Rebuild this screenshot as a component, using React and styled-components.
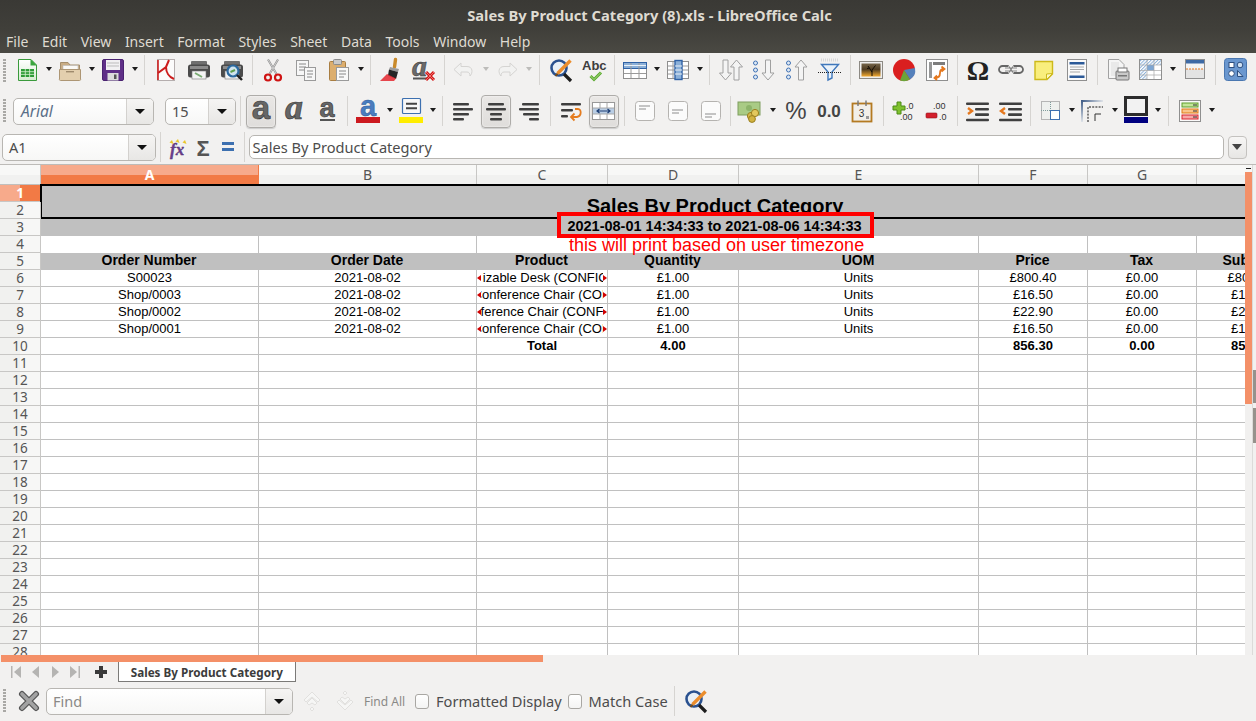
import React from 'react';
import styled, { createGlobalStyle } from 'styled-components';

const Global = createGlobalStyle`
  html, body { margin: 0; padding: 0; background: #f2f1f0; }
  * { box-sizing: border-box; }
`;

const UI = `"Noto Sans", "Open Sans", sans-serif`;
const SHEET = `"Liberation Sans", Arial, sans-serif`;

const Page = styled.div`
  width: 1256px;
  height: 721px;
  overflow: hidden;
  display: flex;
  flex-direction: column;
  background: #f2f1f0;
  font-family: ${UI};
`;

const TitleBar = styled.div`
  height: 29px;
  display: flex;
  align-items: center;
  justify-content: center;
  padding: 0 0 0 43px;
  background: linear-gradient(#3a3935, #403f3a);
  color: #dfdbd2;
  font-size: 14.7px;
  font-weight: 700;
`;

const MenuBar = styled.div`
  height: 24px;
  display: flex;
  align-items: center;
  padding-left: 6px;
  gap: 13.6px;
  background: linear-gradient(#403f3a, #4a4943);
  color: #dfdbd2;
  font-size: 14px;
`;

const Toolbar = styled.div`
  height: ${p => p.$h}px;
  display: flex;
  align-items: center;
  padding-left: ${p => p.$pad}px;
  padding-top: ${p => p.$top || 0}px;
  position: relative;
`;

const Grip = styled.div`
  position: absolute;
  left: 3px;
  top: ${p => p.$y}px;
  width: 3px;
  height: 23px;
  background: repeating-linear-gradient(#a9a8a5 0 2px, transparent 2px 3px);
`;

const Tool = styled.div`
  width: ${p => (p.$active ? 30 : p.$w || 33)}px;
  height: 33px;
  margin: 0 ${p => (p.$active ? 1.5 : 0)}px;
  flex: none;
  display: flex;
  align-items: center;
  justify-content: center;
  border-radius: 4px;
  ${p => p.$active && `
    background: linear-gradient(#e9e7e5, #dfdddb);
    border: 1px solid #aeaca9;
    box-shadow: inset 0 0 2px #fff, 0 1px 1px #ccc;
  `}
`;

const Drop = styled.div`
  width: ${p => p.$w || 10}px;
  flex: none;
  display: flex;
  justify-content: center;
  &::after {
    content: '';
    margin-top: -2px;
    border-left: 3.5px solid transparent;
    border-right: 3.5px solid transparent;
    border-top: 4px solid ${p => (p.$off ? '#bdbcba' : '#1c1c1c')};
  }
`;

const Sep = styled.div`
  width: ${p => p.$w || 8}px;
  height: 30px;
  flex: none;
  display: flex;
  justify-content: center;
  &::after { content: ''; width: 1px; background: #d6d4d1; }
`;

const Combo = styled.div`
  width: ${p => p.$w}px;
  height: ${p => p.$h || 27}px;
  margin-right: ${p => p.$gap || 0}px;
  flex: none;
  display: flex;
  border: 1px solid #b8b6b2;
  border-radius: 5px;
  background: linear-gradient(#fff, #f7f7f6);
  overflow: hidden;
`;

const ComboText = styled.div`
  flex: 1;
  display: flex;
  align-items: center;
  padding-left: ${p => p.$pad || 7}px;
  font-size: ${p => p.$size || 14.5}px;
  font-style: ${p => (p.$italic ? 'italic' : 'normal')};
  color: ${p => p.$color || '#4c4c4c'};
`;

const ComboButton = styled.div`
  width: ${p => p.$w}px;
  border-left: 1px solid #d3d1ce;
  background: linear-gradient(#f5f4f3, #e8e7e5);
  display: flex;
  align-items: center;
  justify-content: center;
  &::after {
    content: '';
    border-left: 5px solid transparent;
    border-right: 5px solid transparent;
    border-top: 5px solid #111;
  }
`;

const FormulaBar = styled.div`
  height: 34px;
  flex: none;
  display: flex;
  align-items: center;
  padding-left: 2px;
  padding-bottom: 1px;
  border-bottom: 1px solid #bdbbb8;
`;

const FormulaInput = styled.div`
  width: 975px;
  height: 24px;
  display: flex;
  align-items: center;
  padding-left: 3px;
  background: #fff;
  border: 1px solid #b8b6b2;
  border-radius: 5px;
  font-size: 14.6px;
  color: #4c4c4c;
`;

const ExpandButton = styled.div`
  width: 19px;
  height: 23px;
  margin-left: 4px;
  border: 1px solid #c4c2bf;
  border-radius: 4px;
  background: linear-gradient(#f7f6f5, #e7e6e4);
  display: flex;
  align-items: center;
  justify-content: center;
  &::after {
    content: '';
    border-left: 5.5px solid transparent;
    border-right: 5.5px solid transparent;
    border-top: 6px solid #444;
  }
`;

const SheetArea = styled.div`
  height: 490px;
  flex: none;
  display: flex;
  overflow: hidden;
  background: #fff;
`;

const SheetView = styled.div`
  width: 1245px;
  height: 490px;
  flex: none;
  overflow: hidden;
  position: relative;
`;

const Grid = styled.div`
  width: 1388px;
  display: grid;
  grid-template-columns: 41px 218px 218px 131px 131px 240px 109px 109px 109px 82px;
  grid-template-rows: 20px;
  grid-auto-rows: 17px;
  font-family: ${SHEET};
  font-size: 13px;
  color: #000;
`;

const ColHead = styled.div`
  display: flex;
  align-items: center;
  justify-content: center;
  font-family: ${UI};
  font-size: 14px;
  font-weight: ${p => (p.$on ? 700 : 400)};
  color: ${p => (p.$on ? '#fff' : '#555')};
  border-right: 1px solid ${p => (p.$on ? '#f27a45' : '#c8c7c5')};
  border-bottom: 1px solid #c0bfbd;
  background: ${p => (p.$on
    ? 'linear-gradient(#f7aa8b 0 55%, #f27a45 55%)'
    : 'linear-gradient(#f8f8f7 0 55%, #f1f1f0 55%)')};
`;

const RowHead = styled.div`
  display: flex;
  align-items: center;
  justify-content: center;
  font-family: ${UI};
  font-size: 13.5px;
  font-weight: ${p => (p.$on ? 700 : 400)};
  color: ${p => (p.$on ? '#fff' : '#555')};
  border-right: 1px solid #c8c7c5;
  border-bottom: 1px solid #c8c7c5;
  background: ${p => (p.$on
    ? 'linear-gradient(90deg, #f7aa8b 0 50%, #f27a45 50%)'
    : 'linear-gradient(90deg, #f1f1ef 0 50%, #f7f7f6 50%)')};
`;

const TitleCell = styled.div`
  grid-column: 2 / -1;
  grid-row: span 2;
  display: flex;
  align-items: flex-end;
  justify-content: center;
  background: #c0c0c0;
  border: solid #000;
  border-width: 2px 0 2px 2px;
  font-size: 20px;
  font-weight: 700;
  line-height: 22px;
  margin-left: -1px;
  margin-top: -1px;
`;

const BandCell = styled.div`
  grid-column: 2 / -1;
  background: #c0c0c0;
`;

const Cell = styled.div`
  position: relative;
  display: flex;
  align-items: center;
  justify-content: center;
  white-space: pre;
  overflow: hidden;
  padding-bottom: 2px;
  font-weight: ${p => (p.$bold ? 700 : 400)};
  border-right: 1px solid #c0c0c0;
  border-bottom: ${p => (p.$open ? 'none' : '1px solid #c0c0c0')};
`;

const HeadCell = styled.div`
  display: flex;
  align-items: center;
  justify-content: center;
  white-space: nowrap;
  padding: 0 2px 3px 0;
  background: #c0c0c0;
  font-size: 14px;
  font-weight: 700;
`;

const ClipMark = styled.span`
  position: absolute;
  top: 0;
  bottom: 0;
  width: 4px;
  ${p => (p.$side === 'left' ? 'left: 0;' : 'right: 0;')}
  display: flex;
  align-items: center;
  background: #fff;
  &::after {
    content: '';
    border-top: 3px solid transparent;
    border-bottom: 3px solid transparent;
    ${p => (p.$side === 'left' ? 'border-right: 4px solid #d00000;' : 'border-left: 4px solid #d00000;')}
  }
`;

const RedBox = styled.div`
  position: absolute;
  left: 557px;
  top: 47px;
  width: 317px;
  height: 26px;
  display: flex;
  align-items: center;
  justify-content: center;
  padding: 1px 2px 0 0;
  background: #c0c0c0;
  border: 4px solid #f00;
  font-family: ${SHEET};
  font-size: 14.5px;
  font-weight: 700;
  color: #000;
  white-space: nowrap;
`;

const RedNote = styled.div`
  position: absolute;
  left: 569px;
  top: 70px;
  font-family: ${SHEET};
  font-size: 18px;
  line-height: 20px;
  color: #f00;
  white-space: nowrap;
`;

const VScroll = styled.div`
  width: 7px;
  flex: none;
  background: #f1f0ef;
  display: flex;
  flex-direction: column;
`;

const ScrollCap = styled.div`
  height: 7px;
  flex: none;
  background: #f7f7f6;
  display: flex;
  align-items: center;
  justify-content: center;
  &::after { content: ''; width: 5px; height: 1px; background: #222; }
`;

const VThumb = styled.div`
  height: 232px;
  flex: none;
  background: #f49068;
`;

const EdgeStrip = styled.div`
  width: 4px;
  flex: none;
  background: #f2f1f0;
  border-left: 1px solid #dcdbd9;
  display: flex;
  flex-direction: column;
  padding-top: 205px;
  gap: 5px;
`;

const EdgeMark = styled.div`
  height: ${p => p.$h}px;
  background: #96928c;
`;

const HScroll = styled.div`
  height: 7px;
  flex: none;
  padding-left: 1px;
  background: #f2f1f0;
`;

const HThumb = styled.div`
  width: 542px;
  height: 7px;
  background: #f49068;
`;

const TabBar = styled.div`
  height: 20px;
  flex: none;
  display: flex;
`;

const NavSlot = styled.div`
  width: ${p => p.$w || 19.6}px;
  padding-left: ${p => p.$pad || 0}px;
  flex: none;
  display: flex;
  align-items: center;
  justify-content: center;
`;

const SheetTab = styled.div`
  width: 178px;
  height: 20px;
  flex: none;
  display: flex;
  align-items: center;
  justify-content: center;
  background: #fff;
  border: 1px solid #7b7a78;
  border-top: none;
  font-size: 11.7px;
  font-weight: 700;
  color: #3c3c3c;
`;

const FindBar = styled.div`
  height: 39px;
  flex: none;
  display: flex;
  align-items: center;
  padding: 0 0 1px 12px;
  position: relative;
`;

const FindAll = styled.span`
  width: 40px;
  margin: 0 11px 0 3px;
  font-size: 12px;
  color: #8a8987;
  white-space: nowrap;
`;

const CheckBox = styled.span`
  width: 14px;
  height: 15px;
  margin-right: ${p => p.$gap}px;
  flex: none;
  border: 1px solid #a9a7a3;
  border-radius: 3px;
  background: linear-gradient(#fff, #f4f4f3);
`;

const CheckLabel = styled.span`
  margin-right: ${p => p.$gap}px;
  font-size: 14.6px;
  color: #4c4c4c;
  white-space: nowrap;
`;

const Svg = ({ w = 24, h = 24, children }) => (
  <svg width={w} height={h} viewBox={`0 0 ${w} ${h}`} fill="none" overflow="visible">{children}</svg>
);

const Bars = ({ rows, y = 4, step = 5, c = '#3f3f3f' }) => rows.map(([x, w], i) => (
  <rect key={i} x={x} y={y + i * step} width={w} height="2.6" rx="1" fill={c} />
));

const letterFont = '"Liberation Sans", sans-serif';
const serifFont = '"Liberation Serif", serif';

const NewDoc = () => (
  <Svg>
    <defs><linearGradient id="ng" x1="0" y1="0" x2="0" y2="1"><stop offset="0" stopColor="#fff" /><stop offset="1" stopColor="#d5ecd0" /></linearGradient></defs>
    <path d="M3.5 1.5H16L21.5 7V22.5H3.5Z" fill="url(#ng)" stroke="#3a9a3c" />
    <path d="M15.5 1L22 7.5H15.5Z" fill="#3aa53e" />
    <rect x="6" y="11" width="13" height="8" fill="#2e9c37" />
    <path d="M6 13.7H19M6 16.4H19M10.3 11V19M14.6 11V19" stroke="#d8f2d2" strokeWidth=".8" />
  </Svg>
);
const Open = () => (
  <Svg>
    <path d="M2.5 21.5V4.5H10L12 7H21.5V21.5Z" fill="#c9ad85" stroke="#a58e6c" />
    <rect x="5" y="7.5" width="15" height="5" fill="#fbfaf6" stroke="#bbb" strokeWidth=".6" />
    <path d="M1.5 11.5H22.5V21A1 1 0 0 1 21.5 22.5H2.5A1 1 0 0 1 1.5 21Z" fill="#e3cfae" stroke="#ad9674" />
    <rect x="8" y="13" width="8" height="1.4" fill="#9e8a6d" />
  </Svg>
);
const Save = () => (
  <Svg>
    <rect x="1.5" y="1.5" width="21" height="21" rx="1.5" fill="#5f2f87" stroke="#4a2270" />
    <rect x="5" y="2" width="14" height="10" fill="#f1f0f2" />
    <path d="M6 5H18M6 8H18" stroke="#bbb" />
    <rect x="6.5" y="15" width="11" height="7.5" fill="#dcdcdc" />
    <rect x="13" y="16.5" width="2.5" height="4.5" fill="#555" />
  </Svg>
);
const Pdf = () => (
  <Svg>
    <rect x="3.5" y="1.5" width="17" height="21" fill="#fbfbfb" stroke="#b5aeae" />
    <path d="M15 2L12 9L4 15M12 9C12 14 15 19 20 21" stroke="#cc1d1d" strokeWidth="2" />
    <path d="M4 2V22" stroke="#cc1d1d" strokeWidth="1.6" />
  </Svg>
);
const Print = ({ glass }) => (
  <Svg>
    <rect x="4" y="3" width="16" height="5" rx="1" fill="#6f6f6f" />
    <rect x="1" y="6.5" width="22" height="13" rx="2.5" fill="#4b4b4b" />
    <rect x="3" y="8" width="18" height="3" fill="#8b8b8b" />
    <rect x="5" y="13" width="14" height="8" fill="#f4f4f4" stroke="#777" strokeWidth=".6" />
    {glass ? (
      <>
        <circle cx="13" cy="13" r="5.5" fill="#cfe3ee" stroke="#2c6aa0" strokeWidth="2.2" />
        <path d="M17 17L22 22" stroke="#222" strokeWidth="2.4" />
        <path d="M10.5 14L15 12" stroke="#5da04e" strokeWidth="2" />
      </>
    ) : <path d="M8 15L15 19" stroke="#79ab72" strokeWidth="2" />}
  </Svg>
);
const Cut = () => (
  <Svg>
    <path d="M8.5 16L17 1.5M15.5 16L7 1.5" stroke="#8d8d8d" strokeWidth="2" />
    <path d="M8.5 16L17 1.5M15.5 16L7 1.5" stroke="#e9e9e9" strokeWidth=".7" />
    <circle cx="7" cy="19.5" r="3" stroke="#cf1313" strokeWidth="2.2" />
    <circle cx="17" cy="19.5" r="3" stroke="#cf1313" strokeWidth="2.2" />
  </Svg>
);
const Copy = () => (
  <Svg>
    <rect x="2.5" y="2.5" width="12" height="15" fill="#f7f7f7" stroke="#9a9a9a" />
    <path d="M5 6H12M5 9H12M5 12H11" stroke="#888" />
    <rect x="10.5" y="9.5" width="11" height="13" fill="#f7f7f7" stroke="#9a9a9a" />
    <path d="M13 13H19M13 16H19M13 19H18" stroke="#888" />
  </Svg>
);
const Paste = () => (
  <Svg>
    <rect x="2.5" y="3.5" width="16" height="19" rx="1" fill="#dcae6e" stroke="#a97e42" />
    <rect x="6.5" y="1.5" width="8" height="5" rx="1" fill="#c9c9c9" stroke="#8c8c8c" />
    <rect x="9.5" y="9.5" width="12" height="13" fill="#f9f9f9" stroke="#9a9a9a" />
    <path d="M12 13H19M12 16H19M12 19H17" stroke="#888" />
  </Svg>
);
const Brush = () => (
  <Svg>
    <path d="M15.5 1.5L14.5 9" stroke="#c98a2a" strokeWidth="3.4" strokeLinecap="round" />
    <path d="M10 9L19 11L18 14L9 11.5Z" fill="#9a9a9a" />
    <path d="M9 11.5L18 14L16 21L8 17.5Z" fill="#262626" />
    <path d="M0 23L7 16L16 20.5L14 23Z" fill="#e4272f" opacity=".85" />
  </Svg>
);
const ClearFmt = () => (
  <Svg>
    <text x="-1" y="18" fontFamily={serifFont} fontStyle="italic" fontWeight="700" fontSize="30" fill="#6a6a6a" stroke="#333" strokeWidth=".5">a</text>
    <rect x="0" y="19.5" width="14" height="2" fill="#555" />
    <path d="M13 14L21 22M21 14L13 22" stroke="#d31717" strokeWidth="3" />
    <path d="M13 14L21 22M21 14L13 22" stroke="#f58a8a" strokeWidth=".8" />
  </Svg>
);
const Undo = ({ flip }) => (
  <Svg>
    <g transform={flip ? 'matrix(-1 0 0 1 24 0)' : undefined}>
      <path d="M9 5L2 11.5L9 18V14H15C17 14 18 15.5 18 18C21 15 21 8.5 15 8.5H9Z" fill="#f2f2f1" stroke="#d5d4d2" />
    </g>
  </Svg>
);
const FindIcon = () => (
  <Svg>
    <circle cx="10" cy="10" r="7.5" fill="#e9f0f7" stroke="#2a518f" strokeWidth="2.6" />
    <path d="M15 16L22 23" stroke="#1d1d1d" strokeWidth="3.2" />
    <path d="M21.5 2.5L8.5 15.5" stroke="#eb8d2c" strokeWidth="3.4" />
    <path d="M8.5 15.5L6.5 18" stroke="#7a4a10" strokeWidth="2" />
  </Svg>
);
const Spell = () => (
  <Svg>
    <text x="0" y="12" fontFamily={letterFont} fontWeight="700" fontSize="13" fill="#3d3d3d">Abc</text>
    <path d="M8.5 18L12 21.5L19 14.5" stroke="#5aa92e" strokeWidth="3" />
    <path d="M8.5 18L12 21.5L19 14.5" stroke="#c3e8a0" strokeWidth=".8" />
  </Svg>
);
const TableRows = () => (
  <Svg>
    <rect x=".5" y="4.5" width="23" height="16" fill="#fff" stroke="#8f8f8f" />
    <rect x=".5" y="4.5" width="23" height="6" fill="#8bb0d8" stroke="#2f62a6" />
    <path d="M1 15.5H23M8 5V20M16 5V20" stroke="#9a9a9a" />
    <path d="M1 7.5H23" stroke="#eaf1f8" />
  </Svg>
);
const TableCols = () => (
  <Svg>
    <rect x="1.5" y="3.5" width="21" height="17" fill="#fff" stroke="#8f8f8f" />
    <path d="M2 8H22M2 12H22M2 16H22M7 4V20" stroke="#9a9a9a" />
    <rect x="9" y="2.5" width="7" height="19" fill="#8bb0d8" stroke="#2f62a6" strokeWidth="1.4" />
    <path d="M9 8H16M9 12H16M9 16H16" stroke="#eaf1f8" />
  </Svg>
);
const ArrowDown = ({ x = 0 }) => <path transform={`translate(${x} 0)`} d="M3.5 2V15H0L6 22L12 15H8.5V2Z" fill="#f4f4f4" stroke="#a0a0a0" />;
const ArrowUp = ({ x = 0 }) => <path transform={`translate(${x} 0)`} d="M3.5 22V9H0L6 2L12 9H8.5V22Z" fill="#f4f4f4" stroke="#a0a0a0" />;
const Dots = () => [5, 12, 19].map(y => <circle key={y} cx="3.5" cy={y} r="2" fill="#dfe9f4" stroke="#3f72b5" />);
const Sort = () => <Svg><ArrowDown x={.5} /><ArrowUp x={11.5} /></Svg>;
const SortAsc = () => <Svg><Dots /><ArrowDown x={10} /></Svg>;
const SortDesc = () => <Svg><Dots /><ArrowUp x={10} /></Svg>;
const Filter = () => (
  <Svg>
    <path d="M3 2H21" stroke="#d8d8d8" strokeWidth="3" strokeDasharray="1 1" />
    <path d="M3.5 6.5H20.5L14 14V20L10 22V14Z" fill="#eaf2fa" stroke="#3f77bb" strokeWidth="1.4" />
    <path d="M0 14.5H24" stroke="#222" strokeDasharray="1 1" />
  </Svg>
);
const Picture = () => (
  <Svg>
    <rect x=".5" y="3.5" width="23" height="17" fill="#eee" stroke="#8d8a84" />
    <defs><linearGradient id="sun" x1="0" y1="0" x2="0" y2="1"><stop offset="0" stopColor="#75654a" /><stop offset=".45" stopColor="#4d3a20" /><stop offset="1" stopColor="#f3a92e" /></linearGradient></defs>
    <rect x="2.5" y="5.5" width="19" height="13" fill="url(#sun)" />
    <path d="M13 18V12M13 14L9 8M13 12L16.5 7.5M10.5 10L8 10.5" stroke="#120c04" strokeWidth="1" />
  </Svg>
);
const Chart = () => (
  <Svg>
    <circle cx="12" cy="12" r="11" fill="#da1f1f" />
    <path d="M12 12L23 10A11 11 0 0 1 18 21.5Z" fill="#5580bb" />
    <path d="M12 12L18 21.5A11 11 0 0 1 8 22.5Z" fill="#6ba53a" />
  </Svg>
);
const Pivot = () => (
  <Svg>
    <rect x="1.5" y="1.5" width="21" height="21" fill="#fff" stroke="#8f8f8f" />
    <rect x="8" y="4" width="12" height="3" fill="#7d7d7d" />
    <rect x="4" y="4" width="3" height="16" fill="#7d7d7d" opacity=".8" />
    <path d="M10 20C14 20 15 18 15 15C15 12 17 11 19 11M16.5 8.5L19.5 11L16.5 13.5M12 17.5L9.5 20L12 22" stroke="#e5781e" strokeWidth="1.8" fill="none" />
  </Svg>
);
const Omega = () => (
  <Svg>
    <text x="12" y="22" textAnchor="middle" fontFamily={serifFont} fontWeight="700" fontSize="28" fill="#222">Ω</text>
  </Svg>
);
const Chain = () => (
  <Svg>
    <path d="M9 8H3.5A3.5 3.5 0 0 0 3.5 15H9M15 8H20.5A3.5 3.5 0 0 1 20.5 15H15" stroke="#666" strokeWidth="1.8" />
    <path d="M6 10H18M6 13H18" stroke="#8a8a8a" />
    <path d="M9 7L15 16M15 7L9 16" stroke="#777" />
  </Svg>
);
const Note = () => (
  <Svg>
    <path d="M3 3.5H20.5V16L15 21.5H3Z" fill="#f9ee7d" stroke="#cdb91a" strokeWidth="1.4" />
    <path d="M20.5 15.5L14.5 16V21.5Z" fill="#fdf8c0" stroke="#cdb91a" />
  </Svg>
);
const HeaderDoc = () => (
  <Svg>
    <rect x="2.5" y="1.5" width="19" height="21" fill="#fafafa" stroke="#8f8f8f" />
    <rect x="4.5" y="4" width="15" height="2.5" fill="#2c5a98" />
    <path d="M5 9H19M5 11.5H19M5 14H15" stroke="#a8a8a8" />
    <rect x="4.5" y="17.5" width="15" height="2.5" fill="#2c5a98" />
  </Svg>
);
const PrintArea = () => (
  <Svg>
    <path d="M2.5 1.5H13L18 6.5V20.5H2.5Z" fill="#f5f5f5" stroke="#a2a2a2" />
    <rect x="5" y="4" width="8" height="14" fill="#e9e9e9" />
    <rect x="10" y="13" width="13" height="9" rx="1" fill="#c9c9c9" stroke="#777" />
    <rect x="12" y="10" width="9" height="4" fill="#fff" stroke="#777" />
    <rect x="12" y="17" width="9" height="1.5" fill="#777" />
  </Svg>
);
const Freeze = () => (
  <Svg>
    <defs>
      <pattern id="hat" width="2.4" height="2.4" patternUnits="userSpaceOnUse" patternTransform="rotate(45)">
        <rect width="2.4" height="2.4" fill="#fff" /><rect width="1" height="2.4" fill="#8bb0d8" />
      </pattern>
    </defs>
    <rect x=".5" y="1.5" width="22" height="20" fill="#fff" stroke="#8f8f8f" />
    <rect x="1" y="2" width="21" height="5" fill="url(#hat)" />
    <rect x="1" y="2" width="6.5" height="19" fill="url(#hat)" />
    <rect x="8" y="7" width="7" height="5.5" fill="#7ea6d3" />
    <path d="M1 7H22M1 12.5H22M1 17H22M8 2V21M15 2V21" stroke="#a8a8a8" strokeWidth=".7" />
  </Svg>
);
const SplitWin = () => (
  <Svg>
    <rect x="2.5" y="1.5" width="19" height="19" fill="#f4f4f4" stroke="#8f8f8f" />
    <rect x="3" y="2" width="18" height="3.5" fill="#3e6aa5" />
    <rect x="3" y="11" width="18" height="9" fill="#e3e3e3" />
    <path d="M3 11H21" stroke="#e5781e" strokeWidth="1.2" strokeDasharray="2 1" />
  </Svg>
);
const Shapes = () => (
  <Svg>
    <rect x=".5" y=".5" width="22" height="22" rx="3" fill="#6a97cf" stroke="#4a77b0" />
    <rect x="5" y="4.5" width="5" height="5" fill="#fff" stroke="#2d4f80" />
    <circle cx="16" cy="7" r="2.8" fill="#cfe0f2" stroke="#2d4f80" />
    <circle cx="7.5" cy="15.5" r="2.8" fill="#fff" stroke="#2d4f80" />
    <path d="M13.5 18.5V12.5L19 18.5Z" fill="#cfe0f2" stroke="#2d4f80" />
  </Svg>
);
const FontA = ({ italic, under }) => (
  <Svg>
    <text x="12" y={under ? 18 : 20} textAnchor="middle" fontFamily={italic ? serifFont : letterFont} fontStyle={italic ? 'italic' : 'normal'} fontWeight="700" fontSize={italic ? 36 : under ? 27 : 33} fill="#666" stroke="#333" strokeWidth=".6">a</text>
    {under && <rect x="5" y="20" width="15" height="2" fill="#555" />}
  </Svg>
);
const FontColor = () => (
  <Svg w={24} h={28}>
    <text x="12" y="18.5" textAnchor="middle" fontFamily={letterFont} fontWeight="700" fontSize="29" fill="#4a7cbf" stroke="#2c5a98" strokeWidth=".5">a</text>
    <rect y="20" width="24" height="6" fill="#cc1a1f" />
  </Svg>
);
const BackColor = () => (
  <Svg w={24} h={28}>
    <rect x="3.5" y="1.5" width="18" height="15" rx="1" fill="#f7f7f7" stroke="#3d70b0" strokeWidth="1.2" />
    <path d="M7 6.8H18M7 11.2H18" stroke="#444" strokeWidth="2" />
    <rect y="20" width="24" height="6" fill="#ffed00" />
  </Svg>
);
const AlignL = () => <Svg><Bars rows={[[2, 16], [2, 20], [2, 16], [2, 11]]} /></Svg>;
const AlignC = () => <Svg><Bars rows={[[4, 16], [2, 20], [6, 12], [6, 12]]} /></Svg>;
const AlignR = () => <Svg><Bars rows={[[5, 17], [2, 20], [6, 16], [12, 10]]} /></Svg>;
const Wrap = () => (
  <Svg>
    <rect x="2" y="4" width="20" height="2.6" rx="1" fill="#3f3f3f" />
    <rect x="2" y="10" width="12" height="2.6" rx="1" fill="#3f3f3f" />
    <rect x="2" y="16" width="7" height="2.6" rx="1" fill="#3f3f3f" />
    <path d="M16 10H19C22.5 10 23 17 18 18H13M15.5 14.5L12 18L15.5 21.5" stroke="#e57c1f" strokeWidth="1.8" />
  </Svg>
);
const Merge = () => (
  <Svg>
    <rect x=".5" y="3.5" width="22" height="17" fill="#fff" stroke="#999" />
    <rect x="1" y="9" width="21" height="6" fill="#b9cde4" />
    <path d="M1 9H22M1 15H22M8 4V9M15 4V9M8 15V20M15 15V20" stroke="#a8a8a8" />
    <path d="M5 12H18M7.5 10L5 12L7.5 14M15.5 10L18 12L15.5 14" stroke="#1d3f75" strokeWidth="1.2" />
  </Svg>
);
const VAlign = ({ y }) => (
  <Svg>
    <rect x="2.5" y="2.5" width="19" height="19" rx="3" fill="#fbfbfb" stroke="#b5b3b0" />
    <path d={`M6 ${y}H17M6 ${y + 3}H13`} stroke="#8d8d8d" strokeWidth="1.1" />
  </Svg>
);
const Money = () => (
  <Svg>
    <rect x="0" y="3" width="22" height="13" fill="#a9cb85" stroke="#7e9e5e" />
    <circle cx="11" cy="9" r="3" fill="#8db46a" />
    <circle cx="13" cy="17" r="3.6" fill="#d7b94a" stroke="#9a7f1e" />
    <circle cx="17" cy="14" r="3.6" fill="#e3c85c" stroke="#9a7f1e" />
    <circle cx="14" cy="20" r="3.4" fill="#d2b340" stroke="#9a7f1e" />
  </Svg>
);
const Percent = () => (
  <Svg>
    <text x="12" y="20" textAnchor="middle" fontFamily={letterFont} fontSize="24" fill="#444">%</text>
  </Svg>
);
const Decimal = () => (
  <Svg w={26}>
    <text x="13" y="18" textAnchor="middle" fontFamily={letterFont} fontWeight="700" fontSize="17" fill="#444">0.0</text>
  </Svg>
);
const Calendar = () => (
  <Svg>
    <rect x="2.5" y="4.5" width="19" height="18" fill="#f2efe9" stroke="#b47a22" strokeWidth="1.8" />
    <path d="M8 1.5V7M16 1.5V7" stroke="#777" strokeWidth="1.4" />
    <text x="11.5" y="17.5" textAnchor="middle" fontFamily={letterFont} fontSize="10" fill="#333">3</text>
    <rect x="16" y="17" width="3" height="3" fill="#999" />
  </Svg>
);
const AddDec = () => (
  <Svg>
    <path d="M5 3H9V7H13V11H9V15H5V11H1V7H5Z" fill="#7fc12e" stroke="#4c8a14" />
    <text x="14" y="10" fontFamily={letterFont} fontSize="9" fill="#333">.0</text>
    <text x="8" y="21" fontFamily={letterFont} fontSize="9" fill="#333">.00</text>
  </Svg>
);
const RemDec = () => (
  <Svg>
    <text x="8" y="10" fontFamily={letterFont} fontSize="9" fill="#333">.00</text>
    <rect x="1" y="14" width="11" height="5" rx="1" fill="#d31f2b" stroke="#96141c" strokeWidth=".6" />
    <text x="14" y="21" fontFamily={letterFont} fontSize="9" fill="#333">.0</text>
  </Svg>
);
const Indent = ({ back }) => (
  <Svg>
    <Bars rows={[[0, 23], [9, 14], [9, 14], [0, 23]]} y={3.5} step={5.4} />
    <path d={back ? 'M6 9L2 12L6 15' : 'M2 9L6 12L2 15'} stroke="#e5781e" strokeWidth="2.4" />
  </Svg>
);
const Borders = () => (
  <Svg>
    <rect x="3.5" y="2.5" width="18" height="18" fill="#eef0ee" stroke="#b5b5b5" />
    <rect x="12.5" y="11.5" width="9" height="9" fill="#fff" stroke="#3d70b0" />
    <path d="M3 11.5H12M12.5 3V11" stroke="#7d9a9a" strokeDasharray="1 1" />
  </Svg>
);
const BorderStyle = () => (
  <Svg w={26}>
    <defs>
      <linearGradient id="bsh" x1="0" x2="1"><stop offset="0" stopColor="#3d5a85" /><stop offset="1" stopColor="#dfe3e8" /></linearGradient>
      <linearGradient id="bsv" x1="0" y1="0" x2="0" y2="1"><stop offset="0" stopColor="#3d5a85" /><stop offset="1" stopColor="#dfe3e8" /></linearGradient>
    </defs>
    <rect x="1" y="1" width="22" height="2" fill="url(#bsh)" />
    <rect x="1" y="1" width="2" height="22" fill="url(#bsv)" />
    <path d="M8 23V8H23" stroke="#111" strokeDasharray="2 1.2" />
    <path d="M15 22V15H21" stroke="#333" />
  </Svg>
);
const BorderColor = () => (
  <Svg h={28}>
    <rect x="1.5" y="0.5" width="21" height="17" fill="#f2f2f2" stroke="#2c2c2c" strokeWidth="3" />
    <rect y="20" width="24" height="6" fill="#000080" />
  </Svg>
);
const Conditional = () => (
  <Svg>
    <rect x="1.5" y="1.5" width="21" height="21" fill="#fafafa" stroke="#8f8f8f" />
    <rect x="4" y="4" width="16" height="4" fill="#c3e59a" stroke="#5f9d2a" />
    <rect x="4" y="10" width="16" height="4" fill="#f9c48a" stroke="#e07b12" />
    <rect x="4" y="16" width="16" height="4" fill="#f7a7a7" stroke="#d8242c" />
    <path d="M15 6H19M15 12H19M15 18H19" stroke="#333" />
  </Svg>
);
const Fx = () => (
  <Svg>
    <text x="4" y="19.5" fontFamily={serifFont} fontStyle="italic" fontWeight="700" fontSize="17" fill="#6b3f8f" stroke="#4b2a68" strokeWidth=".3">fx</text>
    <path d="M6 5L7.5 9L3.5 7.5ZM12 4L13.5 8L9.5 6.5ZM19 5L20.5 9L16.5 7.5Z" fill="#eac62a" />
  </Svg>
);
const Sigma = () => (
  <Svg>
    <text x="12" y="21" textAnchor="middle" fontFamily={letterFont} fontWeight="700" fontSize="22" fill="#555">Σ</text>
  </Svg>
);
const EqualIcon = () => (
  <Svg>
    <rect x="6" y="7" width="12" height="3" fill="#3d70b0" />
    <rect x="6" y="13" width="12" height="3" fill="#3d70b0" />
  </Svg>
);
const CloseX = () => (
  <Svg>
    <path d="M5 5L19 19M19 5L5 19" stroke="#555" strokeWidth="6" strokeLinecap="round" />
    <path d="M5 5L19 19M19 5L5 19" stroke="#a3a3a3" strokeWidth="3.6" strokeLinecap="round" />
  </Svg>
);
const FindStep = ({ down }) => (
  <Svg>
    <g stroke="#e1e0de" fill="#f6f6f5" transform={down ? 'matrix(1 0 0 -1 0 24)' : undefined}>
      <path d="M12 3L20 11L18 13L12 8L6 13L4 11Z" />
      <path d="M12 9L17 14L15 16L12 14L9 16L7 14Z" />
      <path d="M12 18L14 20L12 22L10 20Z" />
    </g>
  </Svg>
);
const Nav = ({ d, bar }) => (
  <Svg w={12} h={14}>
    <path d={d} fill="#b5b4b2" />
    {bar !== undefined && <rect x={bar} y="1" width="1.5" height="12" fill="#b5b4b2" />}
  </Svg>
);
const Plus = () => (
  <Svg w={14} h={14}>
    <path d="M5 1H9V5H13V9H9V13H5V9H1V5H5Z" fill="#3a3a3a" />
  </Svg>
);

const menus = ['File', 'Edit', 'View', 'Insert', 'Format', 'Styles', 'Sheet', 'Data', 'Tools', 'Window', 'Help'];
const columns = ['A', 'B', 'C', 'D', 'E', 'F', 'G', 'H', ''];
const headers = ['Order Number', 'Order Date', 'Product', 'Quantity', 'UOM', 'Price', 'Tax', 'Subtotal', ''];

const orders = [
  ['S00023', '2021-08-02', '\u00a0\u00a0izable Desk (CONFIG', '£1.00', 'Units', '£800.40', '£0.00', '£800.40', ''],
  ['Shop/0003', '2021-08-02', 'Conference Chair (CON', '£1.00', 'Units', '£16.50', '£0.00', '£16.50', ''],
  ['Shop/0002', '2021-08-02', 'ference Chair (CONF', '£1.00', 'Units', '£22.90', '£0.00', '£22.90', ''],
  ['Shop/0001', '2021-08-02', 'Conference Chair (CON', '£1.00', 'Units', '£16.50', '£0.00', '£16.50', ''],
];
const totals = ['', '', 'Total', '4.00', '', '856.30', '0.00', '856.30', ''];
const blank = Array(9).fill('');

function Row({ n, on, children }) {
  return (
    <>
      <RowHead $on={on}>{n}</RowHead>
      {children}
    </>
  );
}

function App() {
  return (
    <Page>
      <Global />
      <TitleBar>Sales By Product Category (8).xls - LibreOffice Calc</TitleBar>
      <MenuBar>{menus.map(m => <span key={m}>{m}</span>)}</MenuBar>

      <Toolbar $h={34} $pad={10.5}>
        <Grip $y={6} />
        <Tool><NewDoc /></Tool><Drop />
        <Tool><Open /></Tool><Drop />
        <Tool><Save /></Tool><Drop />
        <Sep $w={10} />
        <Tool><Pdf /></Tool>
        <Tool><Print /></Tool>
        <Tool><Print glass /></Tool>
        <Sep />
        <Tool><Cut /></Tool>
        <Tool><Copy /></Tool>
        <Tool><Paste /></Tool><Drop />
        <Sep $w={10} />
        <Tool><Brush /></Tool>
        <Tool><ClearFmt /></Tool>
        <Sep $w={6} />
        <Tool><Undo /></Tool><Drop $off />
        <Tool><Undo flip /></Tool><Drop $off />
        <Sep $w={11} />
        <Tool><FindIcon /></Tool>
        <Tool><Spell /></Tool>
        <Sep />
        <Tool><TableRows /></Tool><Drop />
        <Tool><TableCols /></Tool><Drop />
        <Sep $w={10} />
        <Tool><Sort /></Tool>
        <Tool><SortAsc /></Tool>
        <Tool><SortDesc /></Tool>
        <Tool><Filter /></Tool>
        <Sep />
        <Tool><Picture /></Tool>
        <Tool><Chart /></Tool>
        <Tool><Pivot /></Tool>
        <Sep />
        <Tool><Omega /></Tool>
        <Tool><Chain /></Tool>
        <Tool><Note /></Tool>
        <Tool><HeaderDoc /></Tool>
        <Sep />
        <Tool><PrintArea /></Tool>
        <Tool><Freeze /></Tool><Drop $w={11} />
        <Tool><SplitWin /></Tool>
        <Sep />
        <Tool><Shapes /></Tool>
      </Toolbar>

      <Toolbar $h={44} $pad={13} $top={4}>
        <Grip $y={12} />
        <Combo $w={141} $gap={11}>
          <ComboText $italic $pad={7} $size={15.5} $color="#5a6f88">Arial</ComboText>
          <ComboButton $w={27} />
        </Combo>
        <Combo $w={71}>
          <ComboText $pad={6}>15</ComboText>
          <ComboButton $w={27} />
        </Combo>
        <Sep $w={8.5} />
        <Tool $active><FontA /></Tool>
        <Tool><FontA italic /></Tool>
        <Tool><FontA under /></Tool>
        <Sep />
        <Tool><FontColor /></Tool><Drop />
        <Tool><BackColor /></Tool><Drop />
        <Sep $w={9} />
        <Tool><AlignL /></Tool>
        <Tool $active><AlignC /></Tool>
        <Tool><AlignR /></Tool>
        <Sep $w={9} />
        <Tool><Wrap /></Tool>
        <Tool $active><Merge /></Tool>
        <Sep />
        <Tool><VAlign y={7} /></Tool>
        <Tool><VAlign y={11} /></Tool>
        <Tool><VAlign y={15} /></Tool>
        <Sep $w={6} />
        <Tool><Money /></Tool><Drop $w={13} />
        <Tool><Percent /></Tool>
        <Tool><Decimal /></Tool>
        <Tool><Calendar /></Tool>
        <Sep $w={9} />
        <Tool><AddDec /></Tool>
        <Tool><RemDec /></Tool>
        <Sep />
        <Tool><Indent /></Tool>
        <Tool><Indent back /></Tool>
        <Sep $w={6} />
        <Tool><Borders /></Tool><Drop />
        <Tool><BorderStyle /></Tool><Drop />
        <Tool><BorderColor /></Tool><Drop />
        <Sep $w={11} />
        <Tool><Conditional /></Tool><Drop />
      </Toolbar>

      <FormulaBar>
        <Combo $w={154}>
          <ComboText $pad={6}>A1</ComboText>
          <ComboButton $w={27} />
        </Combo>
        <Sep $w={9} />
        <Tool $w={25}><Fx /></Tool>
        <Tool $w={25}><Sigma /></Tool>
        <Tool $w={25}><EqualIcon /></Tool>
        <Sep $w={8.5} />
        <FormulaInput>Sales By Product Category</FormulaInput>
        <ExpandButton />
      </FormulaBar>

      <SheetArea>
        <SheetView>
          <Grid>
            <ColHead />
            {columns.map((c, i) => <ColHead key={i} $on={c === 'A'}>{c}</ColHead>)}

            <Row n={1} on><TitleCell>Sales By Product Category</TitleCell></Row>
            <Row n={2} />
            <Row n={3}><BandCell /></Row>
            <Row n={4}>{blank.map((_, i) => <Cell key={i} $open />)}</Row>
            <Row n={5}>{headers.map((h, i) => <HeadCell key={i}>{h}</HeadCell>)}</Row>

            {orders.map((row, r) => (
              <Row key={r} n={r + 6}>
                {row.map((v, i) => (
                  <Cell key={i}>
                    {v}
                    {i === 2 && <ClipMark $side="left" />}
                    {i === 2 && <ClipMark $side="right" />}
                  </Cell>
                ))}
              </Row>
            ))}

            <Row n={10}>{totals.map((v, i) => <Cell key={i} $bold>{v}</Cell>)}</Row>

            {Array.from({ length: 18 }, (_, r) => (
              <Row key={r} n={r + 11}>{blank.map((_, i) => <Cell key={i} />)}</Row>
            ))}
          </Grid>
          <RedBox>2021-08-01 14:34:33 to 2021-08-06 14:34:33</RedBox>
          <RedNote>this will print based on user timezone</RedNote>
        </SheetView>
        <VScroll>
          <ScrollCap />
          <VThumb />
        </VScroll>
        <EdgeStrip>
          <EdgeMark $h={33} />
          <EdgeMark $h={35} />
        </EdgeStrip>
      </SheetArea>

      <HScroll><HThumb /></HScroll>

      <TabBar>
        <NavSlot $w={26} $pad={6}><Nav d="M11 1V13L4 7Z" bar={1} /></NavSlot>
        <NavSlot><Nav d="M9 1V13L2 7Z" /></NavSlot>
        <NavSlot><Nav d="M3 1V13L10 7Z" /></NavSlot>
        <NavSlot><Nav d="M1 1V13L8 7Z" bar={9.5} /></NavSlot>
        <NavSlot $w={33}><Plus /></NavSlot>
        <SheetTab>Sales By Product Category</SheetTab>
      </TabBar>

      <FindBar>
        <Grip $y={7} />
        <Tool $w={34}><CloseX /></Tool>
        <Combo $w={247}>
          <ComboText $pad={6} $color="#8a8987">Find</ComboText>
          <ComboButton $w={27} />
        </Combo>
        <Tool $w={2} />
        <Tool><FindStep /></Tool>
        <Tool><FindStep down /></Tool>
        <FindAll>Find All</FindAll>
        <CheckBox $gap={7} />
        <CheckLabel $gap={6}>Formatted Display</CheckLabel>
        <CheckBox $gap={7} />
        <CheckLabel $gap={2}>Match Case</CheckLabel>
        <Sep $w={10} />
        <Tool $w={32}><FindIcon /></Tool>
      </FindBar>
    </Page>
  );
}

export default App;
